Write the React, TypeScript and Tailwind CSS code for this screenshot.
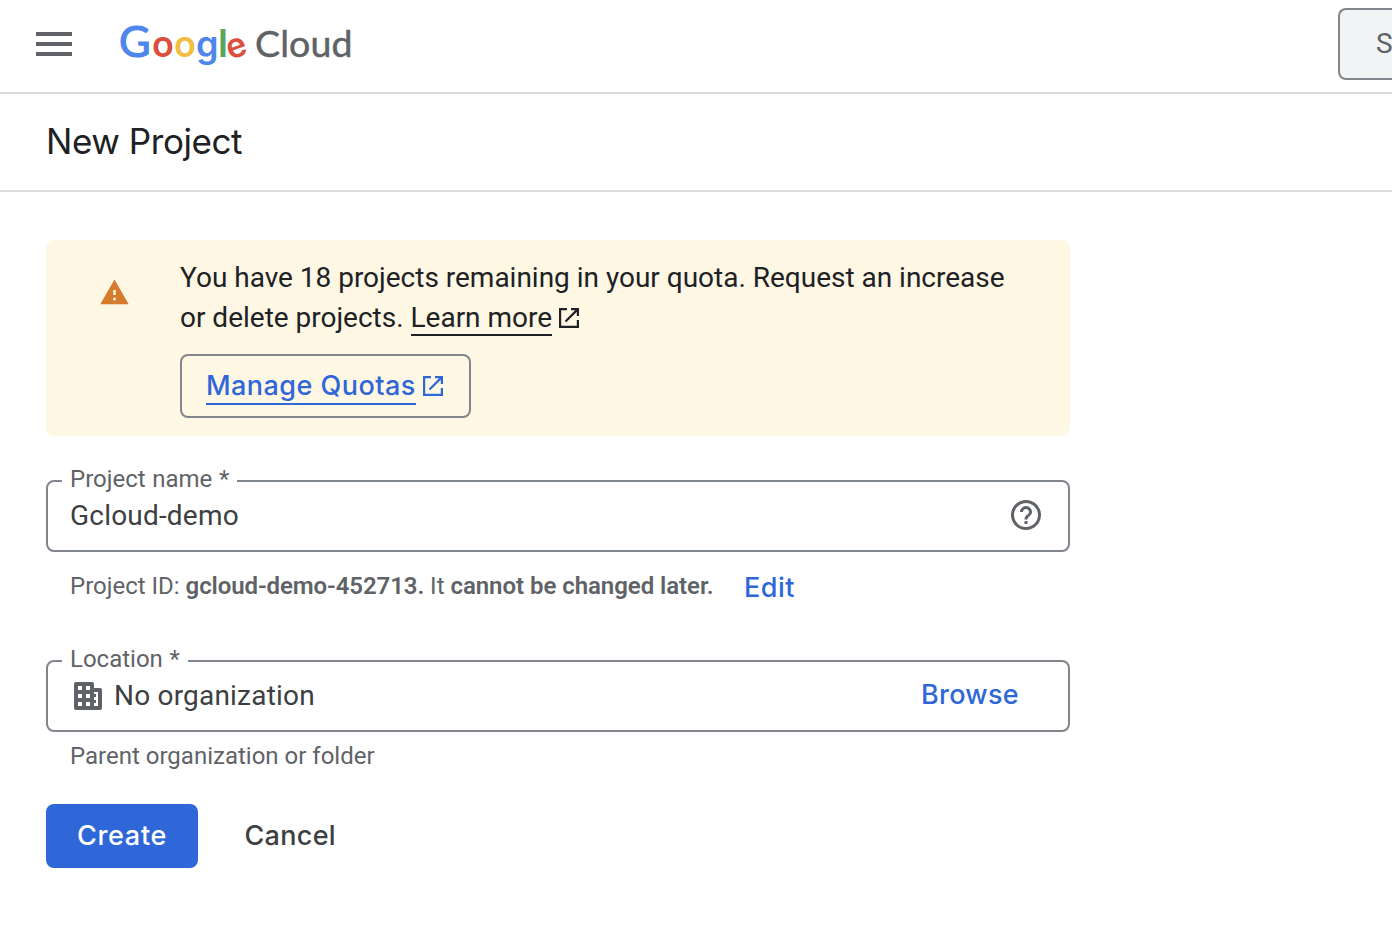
import React from "react";
import { MdWarning, MdHelpOutline } from "react-icons/md";

function OpenIcon({ className }: { className: string }) {
  return (
    <svg viewBox="0 0 20 20" className={className} fill="none" stroke="currentColor" strokeWidth="2.2">
      <path d="M8 1.1H1.1V18.9H18.9V12M12 1.1H18.9V8M18.9 1.1L6.5 13.5" />
    </svg>
  );
}

function BuildingIcon() {
  return (
    <svg viewBox="0 0 28 28" className="h-7 w-7 shrink-0 text-[#5f6368]" fill="currentColor">
      <path fillRule="evenodd" d="M2 0H18Q20 0 20 2V6H26Q28 6 28 8V26Q28 28 26 28H2Q0 28 0 26V2Q0 0 2 0ZM4 4V8H8V4ZM12 4V8H16V4ZM4 12V16H8V12ZM12 12V16H16V12ZM4 20V24H8V20ZM12 20V24H16V20ZM20 10V12H22V15H20V18H22V21H20V24H24V10Z" />
    </svg>
  );
}

function Field({ label, children }: { label: string; children: React.ReactNode }) {
  return (
    <div className="relative flex h-[72px] items-center rounded-lg border-2 border-[#80868b] pl-[22px]">
      <span className="absolute -top-[19px] left-[14px] bg-white px-2 text-[24px] leading-8 [word-spacing:0.7px] whitespace-nowrap text-[#5f6368]">{label}</span>
      {children}
    </div>
  );
}

export default function App() {
  return (
    <div className="h-[952px] w-[1392px] overflow-hidden bg-white font-['Roboto',sans-serif] text-[#202124]">
      <header className="flex h-[94px] items-start border-b-2 border-[#dadce0] pl-9">
        <div className="mt-8 flex w-9 flex-col gap-1.5">
          <div className="h-1 bg-[#5f6368]" />
          <div className="h-1 bg-[#5f6368]" />
          <div className="h-1 bg-[#5f6368]" />
        </div>
        <div className="mt-4 ml-[47px] flex items-baseline font-['Lato',sans-serif] leading-[50px] whitespace-nowrap">
          <div className="flex items-baseline font-['Inter',sans-serif] text-[36px] font-semibold">
            <span className="w-[33px] origin-left scale-x-[1.03] font-['Lato',sans-serif] text-[42px] font-normal text-[#4f86ec] [-webkit-text-stroke:1.1px_currentColor]">G</span>
            <span className="w-[22px] text-[#d9503f]">o</span>
            <span className="w-[22px] text-[#f2bd42]">o</span>
            <span className="w-[22px] text-[#4f86ec]">g</span>
            <span className="w-[8.5px] text-[38px] text-[#58a55c]">l</span>
            <span className="w-[20.5px] origin-[50%_58%] -rotate-[20deg] text-[34px] text-[#d9503f]">e</span>
          </div>
          <span className="ml-[8px] text-[37.5px] tracking-[0.1px] text-[#5f6368] [-webkit-text-stroke:0.5px_currentColor]">Cloud</span>
        </div>
        <div className="mt-2 ml-auto flex h-[72px] w-[54px] shrink-0 items-center overflow-hidden rounded-l-lg border-2 border-r-0 border-[#80868b] bg-[#f1f3f4] pl-9 text-[28px] text-[#5f6368]">S</div>
      </header>
      <div className="flex h-[98px] items-center border-b-2 border-[#dadce0] pb-0.5 pl-[46px]">
        <h1 className="font-['Inter',sans-serif] text-[35px] tracking-[-0.45px]">New Project</h1>
      </div>
      <main className="ml-[46px] w-[1024px] pt-12">
        <section className="flex h-[196px] rounded-lg bg-[#fef7e4] pt-[18px]">
          <MdWarning className="mt-[19px] ml-[53px] h-[31px] w-[31px] shrink-0 text-[#d67a2c]" />
          <div className="ml-[50px]">
            <p className="text-[28px] leading-10 tracking-[-0.01px] whitespace-nowrap">
              You have 18 projects remaining in your quota. Request an increase
              <br />
              or delete projects.{" "}
              <a className="inline-block h-[38px] border-b-2 border-[#202124]">Learn more</a>
              <OpenIcon className="ml-[7px] inline-block h-5 w-5 align-[-1px]" />
            </p>
            <button className="mt-4 flex h-16 w-[291px] items-center rounded-lg border-2 border-[#80868b] pl-6 font-['Inter',sans-serif] text-[27px] font-medium tracking-[0.45px] text-[#2f67d8]">
              <span className="h-[38px] border-b-2 border-[#2f67d8] leading-[38px] whitespace-nowrap">Manage Quotas</span>
              <OpenIcon className="ml-[7px] h-5 w-5 shrink-0" />
            </button>
          </div>
        </section>
        <div className="mt-11">
          <Field label="Project name *">
            <span className="text-[28px] tracking-[0.2px] text-[#3c4043]">Gcloud-demo</span>
            <MdHelpOutline className="mr-6 mb-0.5 ml-auto h-9 w-9 text-[#5f6368]" />
          </Field>
        </div>
        <div className="flex h-[108px] items-start pt-[18px] pl-6 text-[24px] leading-8 whitespace-nowrap text-[#5f6368]">
          <span className="w-[643px]">Project ID: <b className="font-semibold tracking-[-0.1px]">gcloud-demo-452713.</b> It <b className="font-semibold tracking-[-0.05px]">cannot be changed later.</b></span>
          <a className="ml-[31px] pt-0.5 font-['Inter',sans-serif] text-[27px] font-medium tracking-[0.5px] text-[#2f67d8]">Edit</a>
        </div>
        <Field label="Location *">
          <div className="ml-1 flex items-center gap-3">
            <BuildingIcon />
            <span className="text-[28px] tracking-[0.2px] text-[#3c4043]">No organization</span>
          </div>
          <a className="mr-[49px] mb-0.5 ml-auto font-['Inter',sans-serif] text-[27px] font-medium tracking-[0.3px] text-[#2f67d8]">Browse</a>
        </Field>
        <p className="mt-2 pl-6 text-[24px] leading-8 text-[#5f6368]">Parent organization or folder</p>
        <div className="mt-8 flex font-['Inter',sans-serif] text-[27px] font-medium">
          <button className="h-16 w-[152px] rounded-lg bg-[#2f67d8] tracking-[0.7px] text-white">Create</button>
          <button className="ml-[46.5px] h-16 tracking-[0.3px] text-[#3c4043]">Cancel</button>
        </div>
      </main>
    </div>
  );
}
